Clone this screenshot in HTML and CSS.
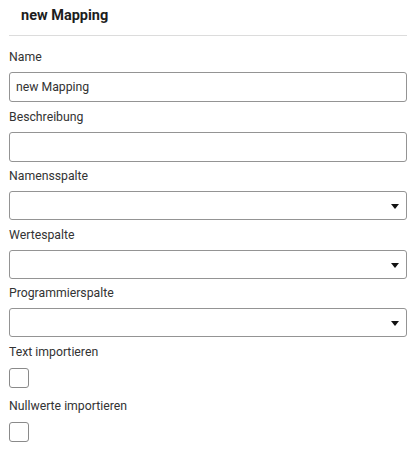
FILE: index.html
```html
<!DOCTYPE html>
<html lang="de">
<head>
<meta charset="utf-8">
<title>new Mapping</title>
<link rel="stylesheet" href="styles.css">
</head>
<body>
<div class="panel">
  <div class="header">
    <h1 class="title">new Mapping</h1>
  </div>
  <form class="form">
    <div class="field">
      <label class="label">Name</label>
      <input class="input" type="text" value="new Mapping">
    </div>
    <div class="field field-tight">
      <label class="label">Beschreibung</label>
      <input class="input" type="text" value="">
    </div>
    <div class="field">
      <label class="label">Namensspalte</label>
      <div class="select"><span class="caret"></span></div>
    </div>
    <div class="field field-tight">
      <label class="label">Wertespalte</label>
      <div class="select"><span class="caret"></span></div>
    </div>
    <div class="field">
      <label class="label">Programmierspalte</label>
      <div class="select"><span class="caret"></span></div>
    </div>
    <div class="field check-field">
      <label class="label">Text importieren</label>
      <span class="checkbox"></span>
    </div>
    <div class="field check-field">
      <label class="label">Nullwerte importieren</label>
      <span class="checkbox"></span>
    </div>
  </form>
</div>
</body>
</html>
```
FILE: styles.css
```css
* { box-sizing: border-box; }
html, body { margin: 0; padding: 0; background: #fff; }
body {
  font-family: Roboto, "Liberation Sans", Arial, sans-serif;
  color: #333;
}
.panel {
  width: 398px;
  margin-left: 9px;
}
.header {
  height: 36px;
  border-bottom: 1px solid #dcdcdc;
  padding-left: 12px;
  display: flex;
  align-items: center;
}
.title {
  margin: 0;
  font-size: 14.5px;
  font-weight: 700;
  color: #1d1d1d;
  line-height: 18px;
  position: relative;
  top: -2px;
}
.form {
  display: flex;
  flex-direction: column;
  padding-top: 13px;
}
.field {
  display: flex;
  flex-direction: column;
  gap: 7px;
  margin-bottom: 7px;
}
.field-tight {
  margin-bottom: 6px;
}
.label {
  display: block;
  font-size: 12.25px;
  line-height: 16px;
  color: #333;
}
.input {
  display: block;
  width: 100%;
  height: 30px;
  margin: 0;
  border: 1px solid #949494;
  border-radius: 3px;
  padding: 0 6px;
  font-family: Roboto, "Liberation Sans", Arial, sans-serif;
  font-size: 12.25px;
  color: #333;
  background: #fff;
  outline: none;
}
.select {
  width: 100%;
  height: 29px;
  border: 1px solid #949494;
  border-radius: 3px;
  background: #fff;
  display: flex;
  align-items: center;
  justify-content: flex-end;
  padding-right: 7px;
}
.caret {
  width: 0;
  height: 0;
  border-left: 4px solid transparent;
  border-right: 4px solid transparent;
  border-top: 5px solid #111;
  margin-top: 1px;
}
.check-field {
  gap: 8px;
  margin-bottom: 10px;
}
.checkbox {
  display: block;
  width: 20px;
  height: 20px;
  border: 1px solid #8a8a8a;
  border-radius: 3px;
  background: #fff;
}
```
